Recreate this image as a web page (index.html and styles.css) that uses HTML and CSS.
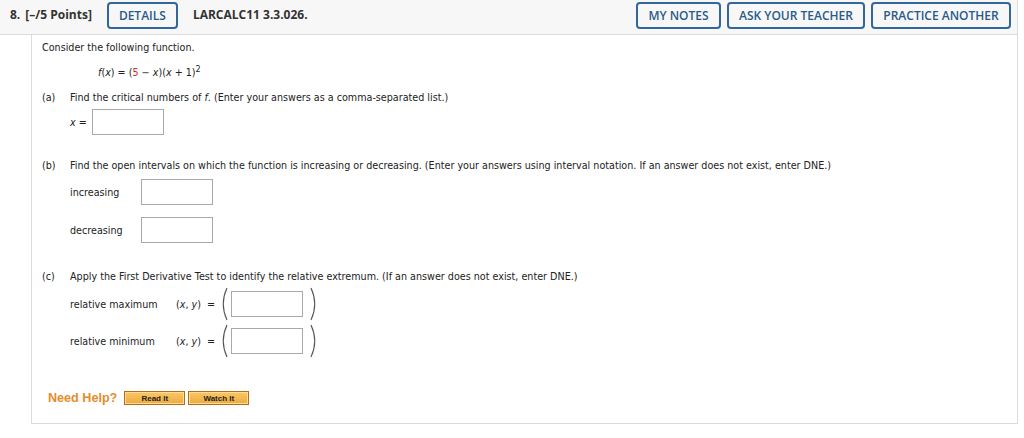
FILE: index.html
```html
<!DOCTYPE html>
<html lang="en">
<head>
    <meta charset="UTF-8">
    <title>Question 8</title>
    <link rel="stylesheet" href="styles.css">
</head>
<body>
    <div class="question">
        <div class="header">
            <span class="num">8.</span>
            <span class="points">[&ndash;/5 Points]</span>
            <button class="btn details">DETAILS</button>
            <span class="code">LARCALC11 3.3.026.</span>
            <div class="actions">
                <button class="btn notes">MY NOTES</button>
                <button class="btn ask">ASK YOUR TEACHER</button>
                <button class="btn practice">PRACTICE ANOTHER</button>
            </div>
        </div>

        <div class="body">
            <p class="intro">Consider the following function.</p>
            <p class="formula"><i>f</i>(<i>x</i>) = (<span class="red">5</span> &minus; <i>x</i>)(<i>x</i> + 1)<sup>2</sup></p>

            <p class="part"><span class="label">(a)</span>Find the critical numbers of <i>f</i>. (Enter your answers as a comma-separated list.)</p>
            <div class="row row-a">
                <span class="var"><i>x</i> =</span>
                <span class="box"></span>
            </div>

            <p class="part part-b"><span class="label">(b)</span>Find the open intervals on which the function is increasing or decreasing. (Enter your answers using interval notation. If an answer does not exist, enter DNE.)</p>
            <div class="row row-b">
                <span class="name">increasing</span>
                <span class="box"></span>
            </div>
            <div class="row row-b">
                <span class="name">decreasing</span>
                <span class="box"></span>
            </div>

            <p class="part part-c"><span class="label">(c)</span>Apply the First Derivative Test to identify the relative extremum. (If an answer does not exist, enter DNE.)</p>
            <div class="row row-c">
                <span class="name wide">relative maximum</span>
                <span class="pair">(<i>x</i>, <i>y</i>)&nbsp; =</span>
                <svg class="paren open" width="10" height="34" viewBox="0 0 10 34"><path d="M8 1 Q0.5 17 8 33" fill="none" stroke="#555" stroke-width="1.1"/></svg>
                <span class="box"></span>
                <svg class="paren close" width="10" height="34" viewBox="0 0 10 34"><path d="M2 1 Q9.5 17 2 33" fill="none" stroke="#555" stroke-width="1.1"/></svg>
            </div>
            <div class="row row-c">
                <span class="name wide">relative minimum</span>
                <span class="pair">(<i>x</i>, <i>y</i>)&nbsp; =</span>
                <svg class="paren open" width="10" height="34" viewBox="0 0 10 34"><path d="M8 1 Q0.5 17 8 33" fill="none" stroke="#555" stroke-width="1.1"/></svg>
                <span class="box"></span>
                <svg class="paren close" width="10" height="34" viewBox="0 0 10 34"><path d="M2 1 Q9.5 17 2 33" fill="none" stroke="#555" stroke-width="1.1"/></svg>
            </div>

            <div class="help">
                <span class="need">Need Help?</span>
                <button class="help-btn">Read It</button>
                <button class="help-btn">Watch It</button>
            </div>
        </div>
    </div>
</body>
</html>
```

FILE: styles.css
```css
body {
    margin: 0;
    font-family: "DejaVu Sans", Verdana, sans-serif;
    color: #222;
    background: #fff;
}
.question {
    width: 1018px;
}
.header {
    display: flex;
    align-items: flex-start;
    height: 35px;
    padding: 2px 0 0 10px;
    background-color: #f7f7f7;
    border-bottom: 1px solid #dcdcdc;
    border-right: 1px solid #dcdcdc;
    font-family: "Open Sans", sans-serif;
    font-weight: 700;
    font-size: 12px;
    line-height: 26px;
    color: #333;
    box-sizing: border-box;
}
.num {
    margin-right: 5px;
}
.btn {
    height: 27px;
    padding: 0;
    background: #f7f7f7;
    border: 2px solid #32679b;
    border-radius: 4px;
    font-family: "Open Sans", sans-serif;
    font-weight: 600;
    font-size: 12px;
    color: #2a5a8c;
    cursor: pointer;
}
.details {
    width: 71px;
    margin-left: 15px;
    margin-right: 15px;
}
.actions {
    margin-left: auto;
    margin-right: 6px;
    display: flex;
    gap: 6px;
}
.notes {
    width: 85px;
}
.ask {
    width: 138px;
}
.practice {
    width: 140px;
}
.body {
    margin-left: 31px;
    height: 389px;
    border-left: 1px solid #dcdcdc;
    border-right: 1px solid #dcdcdc;
    border-bottom: 1px solid #dcdcdc;
    padding: 0 10px;
    font-size: 9.6px;
    box-sizing: border-box;
}
p {
    margin: 0;
}
.intro {
    padding-top: 7px;
}
.formula {
    margin-top: 14px;
    margin-left: 56px;
}
.formula sup {
    font-size: 8px;
    line-height: 0;
}
.red {
    color: #d8261d;
}
.part {
    margin-top: 14px;
}
.label {
    display: inline-block;
    width: 28px;
}
.row {
    display: flex;
    align-items: center;
    padding-left: 28px;
}
.box {
    display: inline-block;
    width: 70px;
    height: 24px;
    border: 1px solid #a9a9a9;
    background: #fff;
}
.row-a {
    margin-top: 6px;
}
.row-a .var {
    width: 22px;
}
.part-b {
    margin-top: 25px;
}
.row-b {
    margin-top: 8px;
}
.row-b + .row-b {
    margin-top: 12px;
}
.name {
    width: 71px;
}
.part-c {
    margin-top: 28px;
}
.row-c {
    margin-top: 5px;
}
.row-c + .row-c {
    margin-top: 3px;
}
.name.wide {
    width: 106px;
}
.pair {
    width: 43px;
}
.paren {
    display: block;
}
.paren.open {
    margin-right: 2px;
}
.paren.close {
    margin-left: 6px;
}
.help {
    display: flex;
    align-items: center;
    margin-top: 33px;
    padding-left: 6px;
}
.need {
    font-family: "Liberation Sans", Arial, sans-serif;
    font-weight: 700;
    font-size: 12.6px;
    color: #e58d2c;
    margin-right: 7px;
}
.help-btn {
    width: 61px;
    height: 14px;
    margin-right: 3px;
    padding: 0;
    background: linear-gradient(#f9c867, #eeaa3c);
    border: 1px solid #b06e18;
    box-shadow: inset 0 0 0 1px #fbdc98;
    font-family: "Liberation Sans", Arial, sans-serif;
    font-weight: 700;
    font-size: 8px;
    color: #222;
}
```
